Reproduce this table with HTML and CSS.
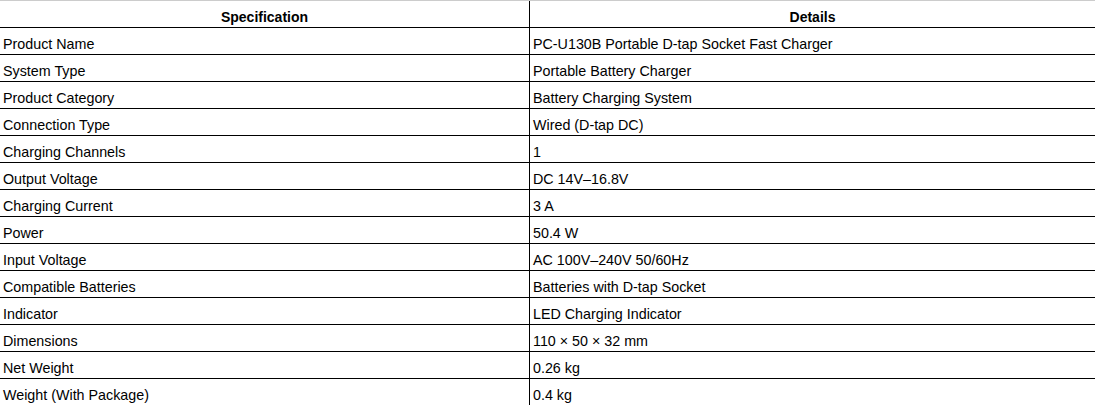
FILE: index.html
```html
<!DOCTYPE html>
<html>
<head>
<meta charset="utf-8">
<link rel="stylesheet" href="styles.css">
</head>
<body>
<table class="spec">
  <thead>
    <tr><th class="c1">Specification</th><th class="c2">Details</th></tr>
  </thead>
  <tbody>
    <tr><td class="c1">Product Name</td><td class="c2">PC-U130B Portable D-tap Socket Fast Charger</td></tr>
    <tr><td class="c1">System Type</td><td class="c2">Portable Battery Charger</td></tr>
    <tr><td class="c1">Product Category</td><td class="c2">Battery Charging System</td></tr>
    <tr><td class="c1">Connection Type</td><td class="c2">Wired (D-tap DC)</td></tr>
    <tr><td class="c1">Charging Channels</td><td class="c2">1</td></tr>
    <tr><td class="c1">Output Voltage</td><td class="c2">DC 14V–16.8V</td></tr>
    <tr><td class="c1">Charging Current</td><td class="c2">3 A</td></tr>
    <tr><td class="c1">Power</td><td class="c2">50.4 W</td></tr>
    <tr><td class="c1">Input Voltage</td><td class="c2">AC 100V–240V 50/60Hz</td></tr>
    <tr><td class="c1">Compatible Batteries</td><td class="c2">Batteries with D-tap Socket</td></tr>
    <tr><td class="c1">Indicator</td><td class="c2">LED Charging Indicator</td></tr>
    <tr><td class="c1">Dimensions</td><td class="c2">110 × 50 × 32 mm</td></tr>
    <tr><td class="c1">Net Weight</td><td class="c2">0.26 kg</td></tr>
    <tr><td class="c1">Weight (With Package)</td><td class="c2">0.4 kg</td></tr>
  </tbody>
</table>
</body>
</html>
```
FILE: styles.css
```css
html, body {
  margin: 0;
  padding: 0;
  background: #ffffff;
}
body {
  font-family: "Liberation Sans", Arial, sans-serif;
  font-size: 14.3px;
  color: #000000;
  overflow: hidden;
}
.spec {
  border-collapse: separate;
  border-spacing: 0;
  width: 1095px;
  table-layout: fixed;
  border-top: 1px solid #cccccc;
}
.spec th,
.spec td {
  height: 27px;
  padding: 8px 3px 0 3px;
  box-sizing: border-box;
  border-bottom: 1px solid #000000;
  vertical-align: top;
  line-height: 16px;
  text-align: left;
  font-weight: normal;
  white-space: nowrap;
}
.spec th {
  text-align: center;
  font-weight: bold;
  font-size: 14px;
}
.spec .c1 {
  width: 530px;
  border-right: 1px solid #000000;
}
```
